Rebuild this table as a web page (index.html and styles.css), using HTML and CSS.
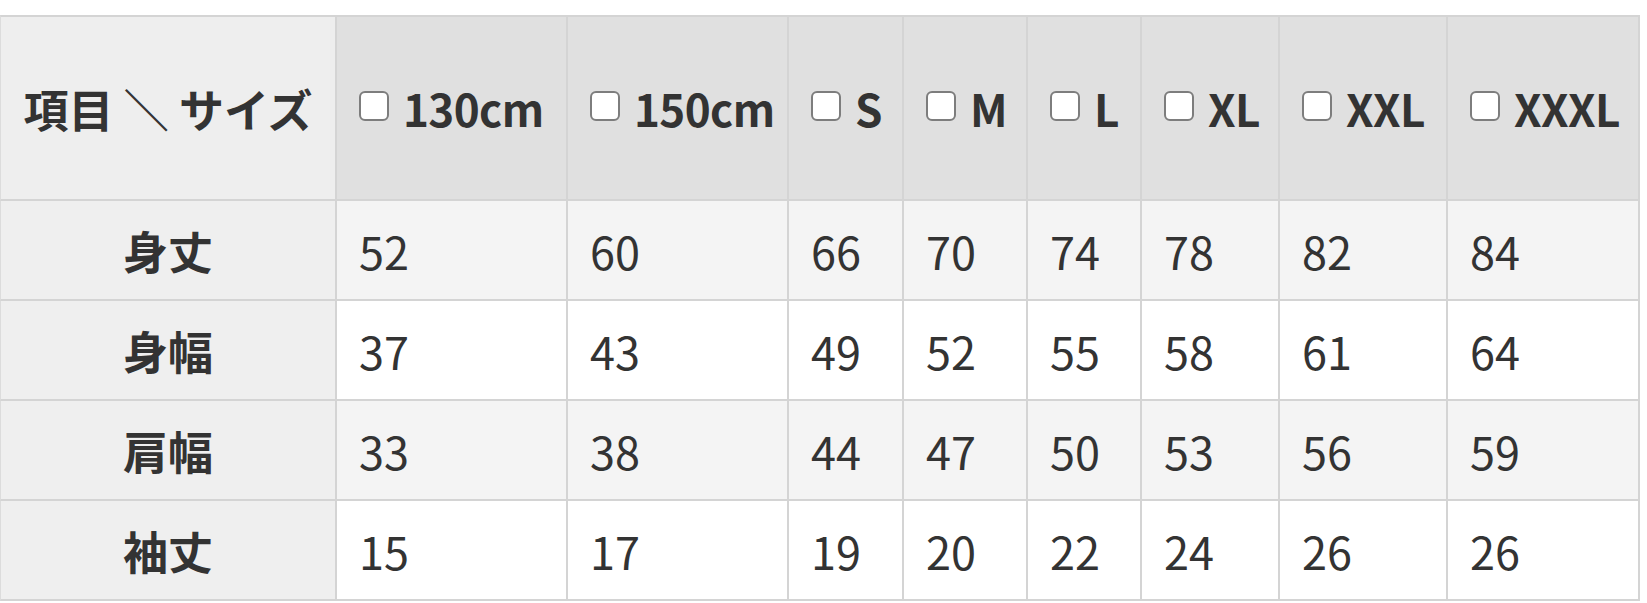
FILE: index.html
```html
<!DOCTYPE html>
<html lang="ja">
<head>
<meta charset="utf-8">
<title>サイズ表</title>
<link rel="stylesheet" href="styles.css">
</head>
<body>
<div class="size-table" role="table">
  <div class="cell corner" role="columnheader">項目 ＼ サイズ</div>
  <div class="cell head" role="columnheader"><span class="cb"></span><span class="lbl">130cm</span></div>
  <div class="cell head" role="columnheader"><span class="cb"></span><span class="lbl">150cm</span></div>
  <div class="cell head" role="columnheader"><span class="cb"></span><span class="lbl">S</span></div>
  <div class="cell head" role="columnheader"><span class="cb"></span><span class="lbl">M</span></div>
  <div class="cell head" role="columnheader"><span class="cb"></span><span class="lbl">L</span></div>
  <div class="cell head" role="columnheader"><span class="cb"></span><span class="lbl">XL</span></div>
  <div class="cell head" role="columnheader"><span class="cb"></span><span class="lbl">XXL</span></div>
  <div class="cell head" role="columnheader"><span class="cb"></span><span class="lbl">XXXL</span></div>

  <div class="cell label" role="rowheader">身丈</div>
  <div class="cell data odd">52</div>
  <div class="cell data odd">60</div>
  <div class="cell data odd">66</div>
  <div class="cell data odd">70</div>
  <div class="cell data odd">74</div>
  <div class="cell data odd">78</div>
  <div class="cell data odd">82</div>
  <div class="cell data odd">84</div>

  <div class="cell label" role="rowheader">身幅</div>
  <div class="cell data">37</div>
  <div class="cell data">43</div>
  <div class="cell data">49</div>
  <div class="cell data">52</div>
  <div class="cell data">55</div>
  <div class="cell data">58</div>
  <div class="cell data">61</div>
  <div class="cell data">64</div>

  <div class="cell label" role="rowheader">肩幅</div>
  <div class="cell data odd">33</div>
  <div class="cell data odd">38</div>
  <div class="cell data odd">44</div>
  <div class="cell data odd">47</div>
  <div class="cell data odd">50</div>
  <div class="cell data odd">53</div>
  <div class="cell data odd">56</div>
  <div class="cell data odd">59</div>

  <div class="cell label" role="rowheader">袖丈</div>
  <div class="cell data">15</div>
  <div class="cell data">17</div>
  <div class="cell data">19</div>
  <div class="cell data">20</div>
  <div class="cell data">22</div>
  <div class="cell data">24</div>
  <div class="cell data">26</div>
  <div class="cell data">26</div>
</div>
</body>
</html>
```
FILE: styles.css
```css
html, body {
  margin: 0;
  padding: 0;
  background: #ffffff;
}

body {
  font-family: "Noto Sans CJK JP", "Noto Sans", sans-serif;
  color: #333333;
  padding-top: 15px;
}

.size-table {
  display: grid;
  width: 1640px;
  grid-template-columns: 337px 231px 221px 115px 124px 114px 138px 168px 192px;
  grid-template-rows: 186px 100px 100px 100px 100px;
}

.cell {
  box-sizing: border-box;
  border-right: 2px solid #d4d4d4;
  border-bottom: 2px solid #d4d4d4;
  display: flex;
  align-items: center;
  font-size: 45px;
  line-height: 1;
  white-space: nowrap;
}

.corner,
.head {
  border-top: 2px solid #d4d4d4;
}

.corner {
  background: #eeeeee;
  justify-content: center;
  font-weight: 700;
  border-left: 1px solid #dcdcdc;
}

.head {
  background: #e0e0e0;
  font-weight: 700;
  font-size: 44px;
  letter-spacing: -0.6px;
  padding-left: 22px;
}

.cb {
  box-sizing: border-box;
  width: 30px;
  height: 30px;
  border: 2px solid #7d7d7d;
  border-radius: 6px;
  background: #ffffff;
  margin-right: 14px;
  flex: none;
  position: relative;
  top: -2px;
}

.label {
  background: #efefef;
  justify-content: center;
  font-weight: 700;
  border-left: 1px solid #dcdcdc;
}

.data {
  background: #ffffff;
  padding-left: 22px;
  font-weight: 400;
}

.data.odd {
  background: #f4f4f4;
}
```
